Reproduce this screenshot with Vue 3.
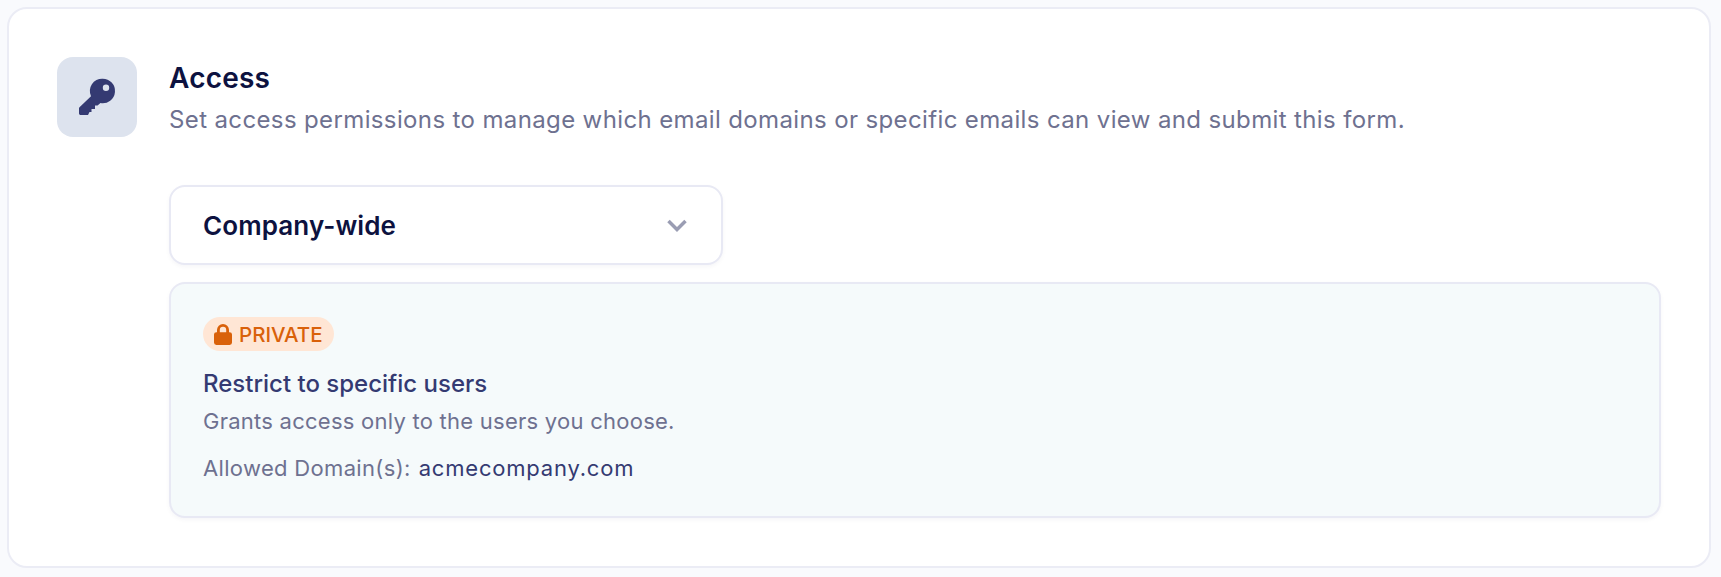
<template>
  <div class="page">
    <section class="card">
      <div class="icon-box">
        <svg width="40" height="40" viewBox="0 0 40 40">
          <path
            fill="#343a72"
            fill-rule="evenodd"
            d="M25.500 1.700a12.300 12.300 0 1 1-2 24.400l-3 2.500H18V32h-3.500v3h-2L11 38H3.400A1.400 1.400 0 0 1 2 36.600v-5.100c0-.5.2-.9.5-1.200L14 19.200A12.300 12.300 0 0 1 25.500 1.700zm3.500 5.800a3.200 3.200 0 1 0 0 6.400 3.200 3.200 0 0 0 0-6.400z"
          />
        </svg>
      </div>
      <div class="content">
        <h2 class="title">Access</h2>
        <p class="subtitle">Set access permissions to manage which email domains or specific emails can view and submit this form.</p>

        <div class="select">
          <span>Company-wide</span>
          <svg width="24" height="24" viewBox="0 0 24 24" fill="none">
            <path d="M3.500 8 12 16.500 20.500 8" stroke="#9a9db3" stroke-width="3.500" />
          </svg>
        </div>

        <div class="panel">
          <span class="badge">
            <svg width="18" height="21" viewBox="0 0 18 21">
              <path
                fill="#d9610a"
                d="M9 0a6 6 0 0 1 6 6v2.200h.6A2.400 2.400 0 0 1 18 10.600v8A2.400 2.400 0 0 1 15.600 21H2.400A2.400 2.400 0 0 1 0 18.600v-8a2.400 2.400 0 0 1 2.400-2.400H3V6a6 6 0 0 1 6-6zm0 2.800A3.200 3.200 0 0 0 5.800 6v2.200h6.400V6A3.200 3.200 0 0 0 9 2.800z"
              />
            </svg>
            PRIVATE
          </span>
          <div class="panel-title">Restrict to specific users</div>
          <div class="panel-desc">Grants access only to the users you choose.</div>
          <div class="domains">
            <span class="domains-label">Allowed Domain(s):</span>
            <span class="domains-value">acmecompany.com</span>
          </div>
        </div>
      </div>
    </section>
  </div>
</template>

<script setup>
</script>

<style>
html, body {
  margin: 0;
  background: #f9fafd;
}
</style>

<style scoped>
.page {
  width: 1721px;
  height: 577px;
  box-sizing: border-box;
  padding: 7px 10px 9px 7px;
  font-family: "Inter", "Noto Sans", sans-serif;
}

.card {
  display: flex;
  gap: 32px;
  height: 561px;
  box-sizing: border-box;
  padding: 48px 48px;
  background: #fff;
  border: 2px solid #ebecf5;
  border-radius: 20px;
}

.icon-box {
  flex-shrink: 0;
  width: 80px;
  height: 80px;
  display: flex;
  align-items: center;
  justify-content: center;
  border-radius: 16px;
  background: #dde3ee;
}

.content {
  flex: 1;
  min-width: 0;
}

.title {
  margin: 3px 0 0;
  font-size: 28px;
  line-height: 36px;
  font-weight: 600;
  letter-spacing: 0.2px;
  color: #0d1240;
}

.subtitle {
  margin: 8px 0 0;
  font-size: 24px;
  line-height: 32px;
  letter-spacing: 0.37px;
  color: #6e7190;
}

.select {
  display: flex;
  align-items: center;
  justify-content: space-between;
  width: 554px;
  height: 80px;
  box-sizing: border-box;
  margin-top: 49px;
  padding: 0 32px;
  background: #fff;
  border: 2px solid #e8e9f4;
  border-radius: 16px;
  box-shadow: 0 2px 4px rgba(20, 25, 80, 0.04);
  font-size: 26px;
  font-weight: 600;
  letter-spacing: 0.1px;
  color: #0d1240;
}

.panel {
  height: 236px;
  box-sizing: border-box;
  margin-top: 17px;
  padding: 33px 32px 0;
  background: #f5fafb;
  border: 2px solid #e8e9f4;
  border-radius: 16px;
  box-shadow: 0 2px 4px rgba(20, 25, 80, 0.04);
}

.badge {
  display: inline-flex;
  align-items: center;
  gap: 7px;
  height: 34px;
  padding: 0 11px;
  border-radius: 17px;
  background: #ffe6d5;
  color: #d9610a;
  font-size: 20.5px;
  font-weight: 500;
}

.panel-title {
  margin-top: 17px;
  font-size: 24px;
  line-height: 32px;
  font-weight: 500;
  color: #343a72;
}

.panel-desc {
  margin-top: 7px;
  font-size: 22px;
  line-height: 28px;
  letter-spacing: 0.25px;
  color: #6e7190;
}

.domains {
  display: flex;
  gap: 8px;
  margin-top: 19px;
  font-size: 22px;
  line-height: 28px;
}

.domains-label {
  letter-spacing: 0.33px;
  color: #6e7190;
}

.domains-value {
  letter-spacing: 0.8px;
  color: #343a72;
}
</style>
